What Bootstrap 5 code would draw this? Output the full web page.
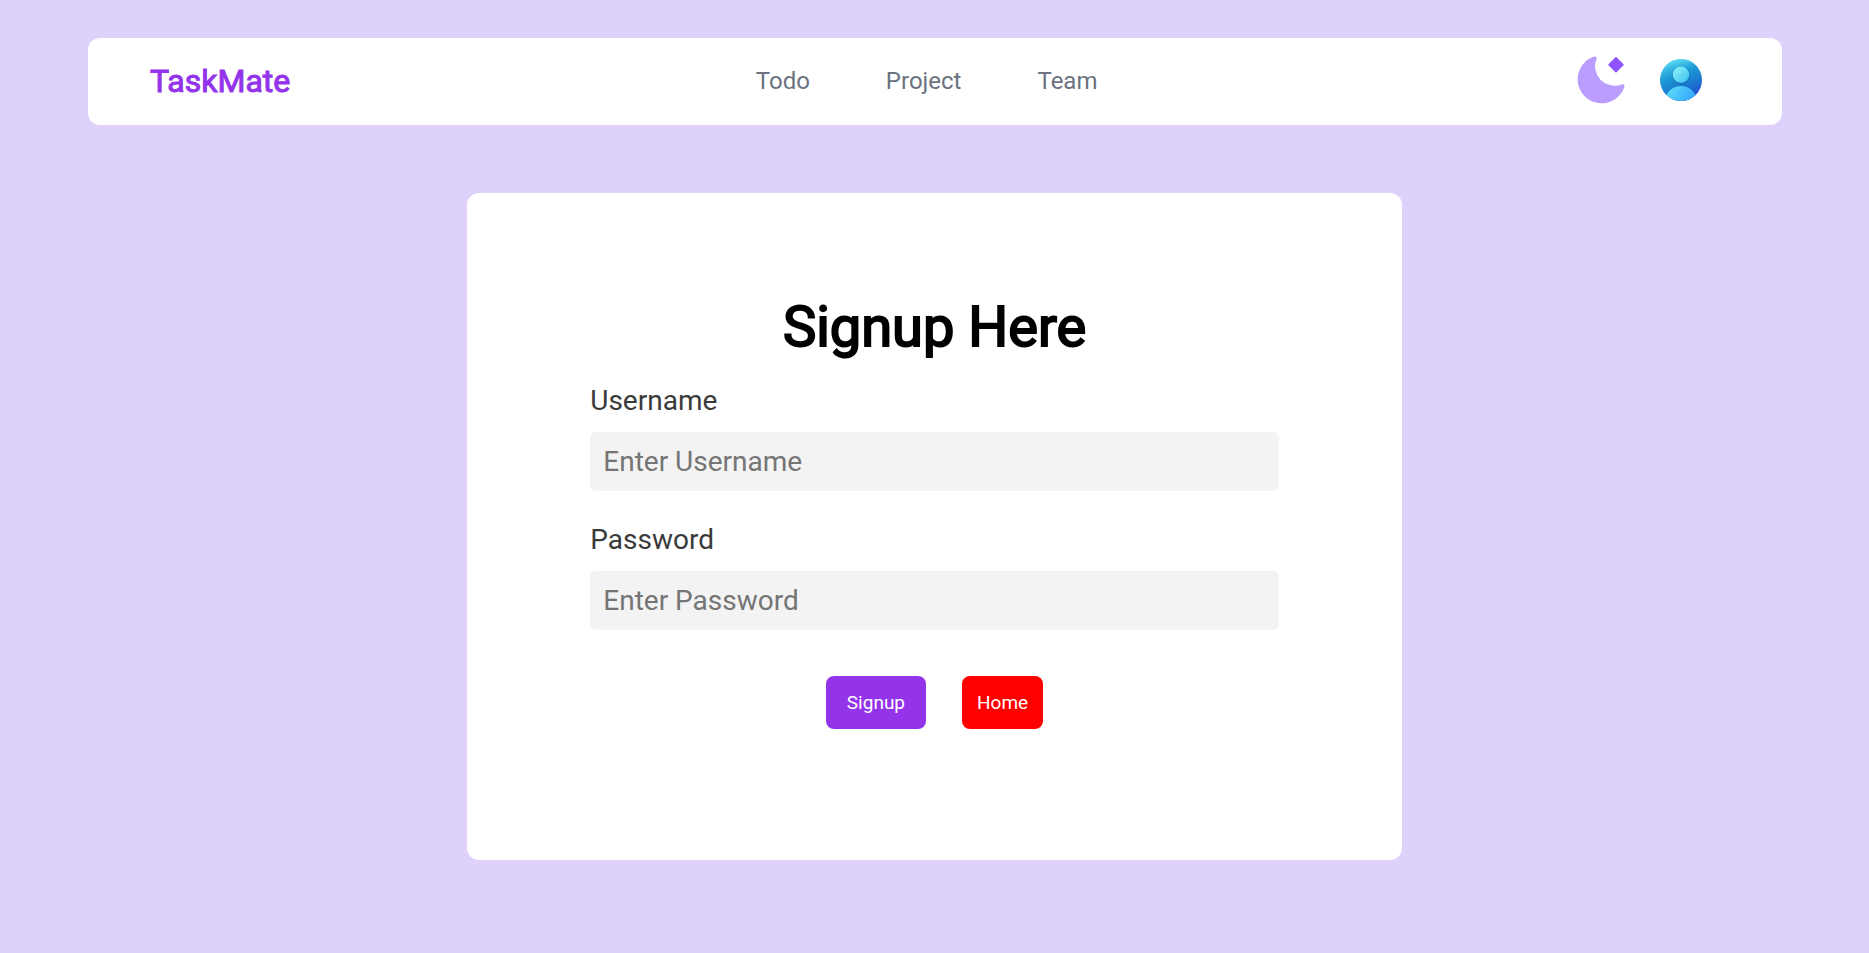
<!DOCTYPE html>
<html lang="en">
<head>
<meta charset="utf-8">
<meta name="viewport" content="width=device-width, initial-scale=1">
<title>TaskMate - Signup</title>
<link href="https://cdn.jsdelivr.net/npm/bootstrap@5.3.0/dist/css/bootstrap.min.css" rel="stylesheet">
<style>
  body { background: #ded1fc; font-family: Roboto, "Liberation Sans", sans-serif; }
  .page { padding: 38px 87px 0 88px; }
  .topbar { background: #fff; border-radius: 12px; padding: 18px 62px; }
  .topbar .navbar-brand { color: #9333ea; font-size: 32px; line-height: 51px; -webkit-text-stroke: 1px #9333ea; }
  .topbar .nav { gap: 76px; padding-bottom: 2px; }
  .topbar .nav-link { color: #6b7280; font-size: 24px; line-height: 36px; }
  .tools { gap: 35px; padding: 0 18px 3px 14px; }
  .tool { line-height: 0; }
  .signup-card { width: 50%; min-height: 70vh; margin: 68px auto 0; padding: 0 123px 32px; border-radius: 12px; background: #fff; }
  .signup-form h1 { color: #000; font-size: 56px; line-height: 68px; -webkit-text-stroke: 2px #000; margin-bottom: 22px; }
  .signup-form label { color: #3a3a3a; font-size: 28px; line-height: 36px; margin-bottom: 13px; }
  .signup-form .form-control { background: #f3f3f3; border: 0; border-radius: 6px; padding: 12px 13px; font-size: 28px; line-height: 35px; height: 59px; }
  .signup-form .form-control::placeholder { color: #757575; }
  .field + .field { margin-top: 31px; }
  .actions { gap: 36px; margin-top: 46px; }
  .actions .btn { border: 0; border-radius: 8px; color: #fff; font-size: 19px; line-height: 25px; padding: 14px 21px; }
  .actions .btn-signup { background: #9333ea; }
  .actions .btn-home { background: #f00; padding: 14px 15px; }
</style>
</head>
<body>
<div class="page">
  <nav class="topbar d-flex align-items-center justify-content-between">
    <a class="navbar-brand p-0 m-0" href="#">TaskMate</a>
    <ul class="nav">
      <li class="nav-item"><a class="nav-link p-0" href="#">Todo</a></li>
      <li class="nav-item"><a class="nav-link p-0" href="#">Project</a></li>
      <li class="nav-item"><a class="nav-link p-0" href="#">Team</a></li>
    </ul>
    <div class="tools d-flex align-items-center">
      <button type="button" class="tool btn p-0 border-0" aria-label="Toggle dark mode">
        <svg width="48" height="48" viewBox="0 0 48 48">
          <path fill="#bb9dff" d="M17.2.5C19 .1 20 1.300 19.500 3A19.500 19.500 0 0 0 44.600 28.500C46.500 27.900 48 29 47.400 31A24 24 0 1 1 17.200.5Z"/>
          <path fill="#8b54ff" stroke="#8b54ff" stroke-width="1.500" stroke-linejoin="round" d="M39 1.800 46 8.800 39 15.800 32 8.800Z"/>
        </svg>
      </button>
      <a class="tool" href="#" aria-label="Profile">
        <svg width="42" height="42" viewBox="0 0 42 42">
          <defs>
            <linearGradient id="disc" x1=".3" y1="0" x2=".75" y2="1"><stop offset="0" stop-color="#4fd5f2"/><stop offset=".35" stop-color="#1d98d4"/><stop offset=".6" stop-color="#1c7fd0"/><stop offset=".9" stop-color="#2052cb"/></linearGradient>
            <linearGradient id="rim" x1=".4" y1="0" x2=".6" y2="1"><stop offset="0" stop-color="#62e3f5" stop-opacity=".7"/><stop offset=".3" stop-color="#2aa6dc" stop-opacity="0"/></linearGradient>
            <linearGradient id="head" x1=".1" y1=".1" x2=".9" y2=".9"><stop offset="0" stop-color="#8aeef8"/><stop offset="1" stop-color="#40c4ef"/></linearGradient>
            <linearGradient id="torso" x1=".1" y1="0" x2=".8" y2=".5"><stop offset="0" stop-color="#5fe0f8"/><stop offset="1" stop-color="#35a5ff"/></linearGradient>
            <clipPath id="round"><circle cx="21" cy="21" r="21"/></clipPath>
            <filter id="soft" x="-30%" y="-30%" width="160%" height="160%" color-interpolation-filters="sRGB"><feDropShadow dx="0" dy="1" stdDeviation="1" flood-color="#0b4a8f" flood-opacity=".5"/></filter>
          </defs>
          <g clip-path="url(#round)">
            <path fill="url(#disc)" d="M0 0H42V42H0Z"/>
            <path fill="url(#rim)" d="M0 0H42V42H0Z"/>
            <circle cx="21" cy="43.500" r="16.500" fill="url(#torso)" filter="url(#soft)"/>
            <circle cx="21" cy="15.700" r="8.200" fill="url(#head)" filter="url(#soft)"/>
          </g>
        </svg>
      </a>
    </div>
  </nav>
</div>
<main class="signup-card d-flex align-items-center justify-content-center">
  <form class="signup-form w-100">
    <h1 class="text-center fw-normal">Signup Here</h1>
    <div class="field">
      <label class="d-block" for="username">Username</label>
      <input class="form-control" type="text" id="username" placeholder="Enter Username">
    </div>
    <div class="field">
      <label class="d-block" for="password">Password</label>
      <input class="form-control" type="password" id="password" placeholder="Enter Password">
    </div>
    <div class="actions d-flex justify-content-center">
      <button type="submit" class="btn btn-signup">Signup</button>
      <button type="button" class="btn btn-home">Home</button>
    </div>
  </form>
</main>
<script src="https://cdn.jsdelivr.net/npm/bootstrap@5.3.0/dist/js/bootstrap.bundle.min.js"></script>
</body>
</html>
